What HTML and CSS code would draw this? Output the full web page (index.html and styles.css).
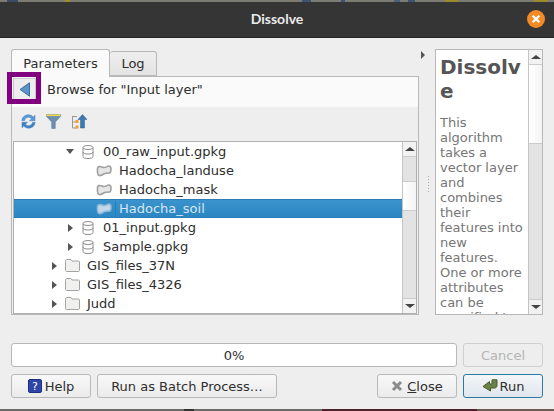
FILE: index.html
```html
<!DOCTYPE html>
<html lang="en">
<head>
    <meta charset="UTF-8">
    <title>Dissolve</title>
    <link rel="stylesheet" href="styles.css">
</head>
<body>
    <div class="desktop-strip top"></div>
    <div class="titlebar">
        <span class="title">Dissolve</span>
        <span class="close-x">
            <svg width="18" height="18" viewBox="0 0 18 18"><circle cx="9" cy="9" r="9" fill="#f28b25"/><path d="M5.7 5.7l6.6 6.6M12.3 5.7l-6.6 6.6" stroke="#fff" stroke-width="2.2"/></svg>
        </span>
    </div>

    <div class="dialog">
        <div class="main">
            <div class="left">
                <div class="tabs">
                    <div class="tab active">Parameters</div>
                    <div class="tab">Log</div>
                </div>
                <div class="panel">
                    <div class="browse-head">
                        <div class="back">
                            <svg width="12" height="15" viewBox="0 0 12 15"><path d="M10.5 .8V14.2L1 7.5z" fill="#5b93c9" stroke="#3d6d9f"/></svg>
                        </div>
                        <span>Browse for "Input layer"</span>
                        <div class="marker"></div>
                    </div>
                    <div class="toolbar">
                        <svg width="15" height="15" viewBox="0 0 15 15"><path d="M.8 6.500C1.300 3 4 .8 7.300 .8C9.300 .8 11 1.600 12.200 3L14 1.300V6.800H8.500L10.500 4.800C9.700 3.800 8.600 3.300 7.300 3.300C5.500 3.300 4 4.500 3.500 6.500z" fill="#5a9ad8" stroke="#3f7cb8" stroke-width=".5"/><path d="M14.200 8.500C13.700 12 11 14.200 7.700 14.200C5.700 14.200 4 13.400 2.800 12L1 13.700V8.200H6.500L4.500 10.200C5.300 11.200 6.400 11.700 7.700 11.700C9.500 11.700 11 10.500 11.500 8.500z" fill="#3f82c6" stroke="#3f7cb8" stroke-width=".5"/></svg>
                        <svg width="15" height="15" viewBox="0 0 15 15"><path d="M.5 .5H14.500V2.500L9.300 8V14.500H5.700V8L.5 2.500z" fill="#6d8fb0" stroke="#56789a" stroke-width=".5"/><rect x=".5" y=".5" width="14" height="1.600" fill="#f2d94e"/></svg>
                        <svg width="16" height="15" viewBox="0 0 16 15"><path d="M1 2.500H6M1.500 2.500V14H6M1.500 8H6" fill="none" stroke="#999"/><rect x="4.500" y="6" width="3" height="3" fill="#f0a030"/><rect x="4.500" y="11.500" width="3" height="3" fill="#f0a030"/><path d="M11.500 .5L16 5.500H13.500V14H9.500V5.500H7z" fill="#3d78b4" stroke="#2b5c8e" stroke-width=".5"/></svg>
                    </div>
                    <div class="tree">
                        <ul class="rows">
                            <li class="row depth-2"><i class="arrow down"></i><svg class="db" width="12" height="14" viewBox="0 0 12 14"><use href="#db"/></svg><span class="gap-db">00_raw_input.gpkg</span></li>
                            <li class="row depth-3"><svg class="poly" width="16" height="12" viewBox="0 0 16 12"><use href="#poly"/></svg><span class="gap-layer">Hadocha_landuse</span></li>
                            <li class="row depth-3"><svg class="poly" width="16" height="12" viewBox="0 0 16 12"><use href="#poly"/></svg><span class="gap-layer">Hadocha_mask</span></li>
                            <li class="row depth-3 selected"><svg class="poly" width="16" height="12" viewBox="0 0 16 12"><use href="#poly"/></svg><span class="gap-layer sel-text">Hadocha_soil</span></li>
                            <li class="row depth-2"><i class="arrow"></i><svg class="db" width="12" height="14" viewBox="0 0 12 14"><use href="#db"/></svg><span class="gap-db">01_input.gpkg</span></li>
                            <li class="row depth-2"><i class="arrow"></i><svg class="db" width="12" height="14" viewBox="0 0 12 14"><use href="#db"/></svg><span class="gap-db">Sample.gpkg</span></li>
                            <li class="row depth-1"><i class="arrow"></i><svg width="15" height="13" viewBox="0 0 15 13"><use href="#folder"/></svg><span class="gap-folder">GIS_files_37N</span></li>
                            <li class="row depth-1"><i class="arrow"></i><svg width="15" height="13" viewBox="0 0 15 13"><use href="#folder"/></svg><span class="gap-folder">GIS_files_4326</span></li>
                            <li class="row depth-1"><i class="arrow"></i><svg width="15" height="13" viewBox="0 0 15 13"><use href="#folder"/></svg><span class="gap-folder">Judd</span></li>
                        </ul>
                        <div class="scrollbar tree-scroll">
                            <div class="sb-btn"><i class="sb-up"></i></div>
                            <div class="sb-trough"><div class="sb-handle"></div></div>
                            <div class="sb-btn"><i class="sb-down"></i></div>
                        </div>
                    </div>
                </div>
            </div>

            <div class="splitter">
                <i class="collapse"></i>
                <div class="grip"></div>
            </div>

            <div class="help">
                <div class="help-text">
                    <h1>Dissolve</h1>
                    <p>This algorithm takes a vector layer and combines their features into new features. One or more attributes can be specified to</p>
                </div>
                <div class="scrollbar help-scroll">
                    <div class="sb-btn"><i class="sb-up"></i></div>
                    <div class="sb-trough"><div class="sb-handle"></div></div>
                    <div class="sb-btn"><i class="sb-down"></i></div>
                </div>
            </div>
        </div>

        <div class="progress-row">
            <div class="progress">0%</div>
            <button class="btn wide" disabled>Cancel</button>
        </div>

        <div class="button-row">
            <button class="btn wide">
                <svg width="14" height="14" viewBox="0 0 14 14"><rect x=".5" y=".5" width="13" height="13" rx="1.500" fill="#2f46a8" stroke="#1e2f80"/><text x="7" y="11" text-anchor="middle" font-size="11" font-family="DejaVu Sans" fill="#fff">?</text></svg>
                Help
            </button>
            <button class="btn batch">Run as Batch Process…</button>
            <span class="spacer"></span>
            <button class="btn wide">
                <svg width="12" height="12" viewBox="0 0 12 12"><path d="M2 2l8 8M10 2l-8 8" stroke="#8a8a8a" stroke-width="3"/></svg>
                <span class="close-label"><u>C</u>lose</span>
            </button>
            <button class="btn wide run">
                <svg width="16" height="15" viewBox="0 0 16 15"><path d="M10 .8H15V6.500C15 8 14 9 12.500 9H8.500V12L1 7.500L7.500 2.500V5H10z" fill="#6a8248" stroke="#46592d" stroke-linejoin="round"/></svg>
                Run
            </button>
        </div>
    </div>
    <div class="desktop-strip bottom"></div>

    <svg class="defs" width="0" height="0">
        <defs>
            <g id="db">
                <ellipse cx="6" cy="2.500" rx="5" ry="2" fill="none" stroke="#8c8c8c"/>
                <path d="M1 2.500V11.500C1 12.800 3 13.500 6 13.500S11 12.800 11 11.500V2.500M1 7C1 8.300 3 9 6 9S11 8.300 11 7" fill="none" stroke="#8c8c8c"/>
            </g>
            <path id="poly" d="M1.500 3.500C1.500 1.500 4 1 6 2C8 3 10 2.500 12 1.200C14 .5 15 2 15 4C15 6 14.500 8 13.500 8C11.500 8 9 8 7.500 9C5.500 10.500 3 11.500 2 9.500C1.200 8 1.500 5.500 1.500 3.500z"/>
            <path id="folder" d="M.5 2.500V11.500C.5 12 1 12.500 1.500 12.500H13.500C14 12.500 14.500 12 14.500 11.500V3C14.500 2.500 14 2 13.500 2H7L6 .5H1.500C1 .5 .5 1 .5 1.500z" fill="#f0f0ee" stroke="#a3a3a3"/>
        </defs>
    </svg>
</body>
</html>
```

FILE: styles.css
```css
* {
    box-sizing: border-box;
}

html, body {
    margin: 0;
    height: 411px;
    overflow: hidden;
}

body {
    display: flex;
    flex-direction: column;
    font-family: 'DejaVu Sans', sans-serif;
    font-size: 13px;
    color: #2e2e2e;
    background-color: #eeeeee;
}

.defs {
    position: absolute;
}

.desktop-strip {
    flex: none;
    height: 2px;
}

.desktop-strip.top {
    background: linear-gradient(90deg, #7d7c72 0 7px, #3c4c68 7px 18px, #7d7c72 18px 65px, #a08c28 65px 70px, #7d7c72 70px 302px, #3c5478 302px 311px, #7d7c72 311px 341px, #3c5478 341px 345px, #7d7c72 345px 394px, #4a6080 394px 400px, #7d7c72 400px 408px, #3c5478 408px 415px, #7d7c72 415px 445px, #9a8a2c 445px 458px, #7d7c72 458px 534px, #9a8a2c 534px 548px, #7d7c72 548px);
}

.desktop-strip.bottom {
    background: linear-gradient(90deg, #6a6a66 0 184px, #33332f 184px 194px, #6a6a66 194px 322px, #4c2228 322px 477px, #6a5a50 477px);
}

.titlebar {
    height: 36px;
    flex: none;
    display: flex;
    align-items: center;
    justify-content: center;
    position: relative;
    padding-bottom: 2px;
    background-color: #353535;
    border-bottom: 1px solid #222;
}

.title {
    font-family: Lato, sans-serif;
    font-weight: 700;
    font-size: 14px;
    color: #ececec;
}

.close-x {
    position: absolute;
    right: 9px;
    top: 8px;
    height: 18px;
}

.dialog {
    flex: 1;
    display: flex;
    flex-direction: column;
    padding: 11px 11px 0;
}

.main {
    display: flex;
    height: 266px;
}

.left {
    width: 408px;
    display: flex;
    flex-direction: column;
}

.tabs {
    display: flex;
    align-items: flex-end;
    height: 27px;
    flex: none;
    position: relative;
    z-index: 1;
}

.tab {
    height: 25px;
    width: 47px;
    display: flex;
    align-items: center;
    justify-content: center;
    background: linear-gradient(#eeeeee, #e4e4e4);
    border: 1px solid #b8b8b8;
    border-left: 0;
    border-radius: 3px 3px 0 0;
}

.tab.active {
    height: 28px;
    width: 99px;
    background: #fafafa;
    border-left: 1px solid #b8b8b8;
    border-bottom: 0;
    margin-bottom: -1px;
}

.panel {
    flex: 1;
    display: flex;
    flex-direction: column;
    min-height: 0;
    background-color: #eeeeee;
    border: 1px solid #b8b8b8;
}

.browse-head {
    height: 30px;
    flex: none;
    display: flex;
    align-items: center;
    padding: 0 0 6px 1px;
    background-color: #fafafa;
    position: relative;
}

.browse-head span {
    margin-left: 11px;
}

.back {
    width: 23px;
    height: 22px;
    display: flex;
    align-items: center;
    justify-content: center;
    background: #ededed;
    border: 1px solid #c8c8c8;
}

/* annotation drawn over the back button */
.marker {
    position: absolute;
    z-index: 2;
    left: -5px;
    top: -5px;
    width: 34px;
    height: 32px;
    border: 5px solid #800080;
}

.toolbar {
    height: 34px;
    flex: none;
    display: flex;
    align-items: center;
    gap: 10px;
    padding: 0 0 5px 9px;
}

.tree {
    flex: 1;
    min-height: 0;
    display: flex;
    margin: 0 1px 0 1px;
    background-color: #ffffff;
    border: 1px solid #b0b0b0;
    overflow: hidden;
}

.rows {
    flex: 1;
    list-style: none;
    margin: 0;
    padding: 0;
    overflow: hidden;
}

.row {
    height: 19px;
    display: flex;
    align-items: center;
    white-space: nowrap;
}

.depth-1 {
    padding-left: 38px;
}

.depth-2 {
    padding-left: 54px;
}

.depth-3 {
    padding-left: 82px;
}

.poly {
    fill: #e6e6e6;
    stroke: #a0a0a0;
    stroke-width: 1.6;
}

.row.selected {
    background: linear-gradient(#3a93cd, #2b86c2);
    color: #d7e6f2;
    border-top: 1px solid #2a7db6;
    border-bottom: 1px solid #2a7db6;
}

.selected .poly {
    fill: #c0d8ea;
    stroke: #90b8d6;
}

.sel-text {
    border-left: 1px solid #2a7db6;
    padding-left: 3px;
    margin-left: 3px !important;
}

.arrow {
    width: 0;
    height: 0;
    margin-right: 8px;
    border-left: 5px solid #555;
    border-top: 4px solid transparent;
    border-bottom: 4px solid transparent;
}

.depth-2 .arrow {
    margin-right: 9px;
}

.arrow.down {
    margin-left: -2px;
    margin-right: 8px;
    border-left: 4.500px solid transparent;
    border-right: 4.500px solid transparent;
    border-top: 5px solid #555;
    border-bottom: 0;
}

.gap-db {
    margin-left: 9px;
}

.gap-layer {
    margin-left: 7px;
}

.gap-folder {
    margin-left: 7px;
}

.scrollbar {
    width: 14px;
    flex: none;
    display: flex;
    flex-direction: column;
    background-color: #eeeeee;
    border-left: 1px solid #c4c4c4;
}

.sb-btn {
    height: 14px;
    flex: none;
    display: flex;
    align-items: center;
    justify-content: center;
    background-color: #f2f2f2;
}

.sb-up, .sb-down {
    width: 0;
    height: 0;
    border-left: 5px solid transparent;
    border-right: 5px solid transparent;
}

.sb-up {
    border-bottom: 4px solid #444;
}

.sb-down {
    border-top: 4px solid #444;
}

.sb-trough {
    flex: 1;
    background-color: #e3e3e3;
    border-top: 1px solid #cccccc;
    border-bottom: 1px solid #cccccc;
}

.sb-handle {
    background: linear-gradient(90deg, #ffffff, #f4f4f4);
    border-bottom: 1px solid #cccccc;
}

.tree-scroll .sb-handle {
    height: 30px;
    margin-top: 24px;
    border-top: 1px solid #cccccc;
}

.help-scroll .sb-handle {
    height: 79px;
}

.splitter {
    width: 16px;
    display: flex;
    flex-direction: column;
    align-items: center;
}

.collapse {
    width: 0;
    height: 0;
    margin-top: 2px;
    margin-left: -8px;
    border-left: 4px solid #555;
    border-top: 4px solid transparent;
    border-bottom: 4px solid transparent;
}

.grip {
    width: 1px;
    height: 17px;
    margin-top: 117px;
    margin-left: 2px;
    background: repeating-linear-gradient(#aaaaaa 0 1px, transparent 1px 3px);
}

.help {
    width: 108px;
    display: flex;
    background-color: #ffffff;
    border: 1px solid #b8b8b8;
}

.help-text {
    flex: 1;
    min-width: 0;
    overflow: hidden;
    padding: 5px 4px 0 4px;
    color: #767676;
}

.help-text h1 {
    margin: 0 0 12px;
    font-size: 20px;
    line-height: 24px;
    color: #555555;
    word-break: break-all;
}

.help-text p {
    margin: 0;
    line-height: 15px;
}

.progress-row,
.button-row {
    display: flex;
    gap: 6px;
}

.progress-row {
    margin-top: 28px;
}

.button-row {
    margin-top: 7px;
}

.progress {
    flex: 1;
    height: 24px;
    display: flex;
    align-items: center;
    justify-content: center;
    background-color: #ffffff;
    border: 1px solid #b8b8b8;
    border-radius: 3px;
}

.btn {
    height: 24px;
    display: flex;
    align-items: center;
    justify-content: center;
    gap: 3px;
    padding: 0;
    font-family: inherit;
    font-size: 13px;
    color: #2e2e2e;
    background: linear-gradient(#f8f8f8, #ebebeb);
    border: 1px solid #b8b8b8;
    border-radius: 3px;
}

.btn:disabled {
    color: #b4b4b4;
    background: #eeeeee;
    border-color: #cfcfcf;
}

.wide {
    width: 80px;
}

.batch {
    width: 180px;
}

.spacer {
    flex: 1;
}

.close-label {
    margin-left: 1px;
}

.btn.run {
    gap: 2px;
    border-color: #2a7aa8;
    background: linear-gradient(#f4f6f8, #dfe6ec);
}
```
